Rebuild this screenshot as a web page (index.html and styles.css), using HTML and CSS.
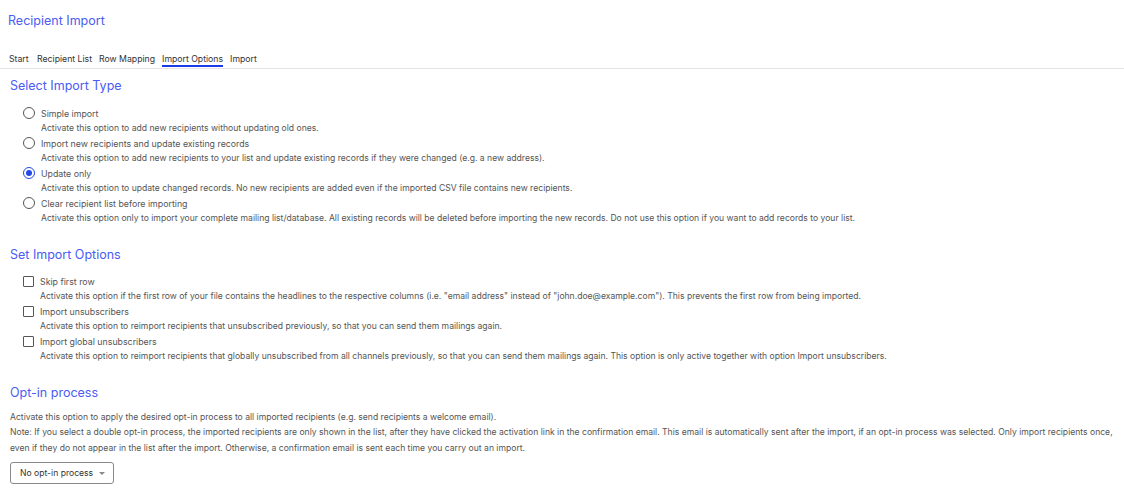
FILE: index.html
```html
<!DOCTYPE html>
<html lang="en">
<head>
    <meta charset="UTF-8">
    <meta name="viewport" content="width=device-width, initial-scale=1.0">
    <title>Recipient Import</title>
    <link rel="stylesheet" href="styles.css">
</head>
<body>
    <div class="page">
        <h1 class="page-title">Recipient Import</h1>

        <nav class="tabs">
            <a class="tab">Start</a>
            <a class="tab">Recipient List</a>
            <a class="tab">Row Mapping</a>
            <a class="tab active">Import Options</a>
            <a class="tab">Import</a>
        </nav>

        <section class="section">
            <h2>Select Import Type</h2>
            <div class="options">
                <label class="option">
                    <span class="radio"></span>
                    <span class="option-text">
                        <span class="option-label">Simple import</span>
                        <span class="option-desc">Activate this option to add new recipients without updating old ones.</span>
                    </span>
                </label>
                <label class="option">
                    <span class="radio"></span>
                    <span class="option-text">
                        <span class="option-label">Import new recipients and update existing records</span>
                        <span class="option-desc">Activate this option to add new recipients to your list and update existing records if they were changed (e.g. a new address).</span>
                    </span>
                </label>
                <label class="option">
                    <span class="radio checked"></span>
                    <span class="option-text">
                        <span class="option-label">Update only</span>
                        <span class="option-desc">Activate this option to update changed records. No new recipients are added even if the imported CSV file contains new recipients.</span>
                    </span>
                </label>
                <label class="option">
                    <span class="radio"></span>
                    <span class="option-text">
                        <span class="option-label">Clear recipient list before importing</span>
                        <span class="option-desc">Activate this option only to import your complete mailing list/database. All existing records will be deleted before importing the new records. Do not use this option if you want to add records to your list.</span>
                    </span>
                </label>
            </div>
        </section>

        <section class="section">
            <h2>Set Import Options</h2>
            <div class="options">
                <label class="option">
                    <span class="checkbox"></span>
                    <span class="option-text">
                        <span class="option-label">Skip first row</span>
                        <span class="option-desc">Activate this option if the first row of your file contains the headlines to the respective columns (i.e. "email address" instead of "john.doe@example.com"). This prevents the first row from being imported.</span>
                    </span>
                </label>
                <label class="option">
                    <span class="checkbox"></span>
                    <span class="option-text">
                        <span class="option-label">Import unsubscribers</span>
                        <span class="option-desc">Activate this option to reimport recipients that unsubscribed previously, so that you can send them mailings again.</span>
                    </span>
                </label>
                <label class="option">
                    <span class="checkbox"></span>
                    <span class="option-text">
                        <span class="option-label">Import global unsubscribers</span>
                        <span class="option-desc">Activate this option to reimport recipients that globally unsubscribed from all channels previously, so that you can send them mailings again. This option is only active together with option Import unsubscribers.</span>
                    </span>
                </label>
            </div>
        </section>

        <section class="section">
            <h2 class="tight">Opt-in process</h2>
            <p class="note">Activate this option to apply the desired opt-in process to all imported recipients (e.g. send recipients a welcome email).<br>
            Note: If you select a double opt-in process, the imported recipients are only shown in the list, after they have clicked the activation link in the confirmation email. This email is automatically sent after the import, if an opt-in process was selected. Only import recipients once, even if they do not appear in the list after the import. Otherwise, a confirmation email is sent each time you carry out an import.</p>
            <div class="dropdown">
                <span>No opt-in process</span>
                <span class="caret"></span>
            </div>
        </section>
    </div>
</body>
</html>
```

FILE: styles.css
```css
body {
    margin: 0;
    font-family: Inter, "Noto Sans", sans-serif;
    color: #555;
    background-color: white;
}

.page {
    padding: 13px 0 0 8px;
}

.page-title {
    font-size: 12.5px;
    font-weight: 400;
    line-height: 15px;
    color: #4a5cf3;
    margin: 0 0 26px 0;
}

.tabs {
    display: flex;
    gap: 7px;
    border-bottom: 1px solid #e4e4e4;
    margin-left: -8px;
    padding-left: 9px;
}

.tab {
    font-size: 8.7px;
    line-height: 10.5px;
    color: #333;
    border-bottom: 2px solid transparent;
    margin-bottom: 1px;
}

.tab:first-child {
    margin-right: 1.5px;
}

.tab.active {
    border-bottom-color: #1a3ce8;
}

.section {
    margin-top: 21px;
}

.tabs + .section {
    margin-top: 9.5px;
}

.section h2 {
    font-size: 12.5px;
    font-weight: 400;
    line-height: 15px;
    color: #4a5cf3;
    margin: 0 0 12.5px 2px;
}

.section h2.tight {
    margin-bottom: 9.5px;
}

.options {
    padding-left: 15px;
    display: flex;
    flex-direction: column;
}

.option {
    display: flex;
    gap: 6px;
    font-size: 8.6px;
    line-height: 15px;
}

.option-text {
    display: flex;
    flex-direction: column;
}

.option-label {
    font-size: 8.8px;
    color: #555;
}

.radio {
    width: 10px;
    height: 10px;
    border: 1px solid #555;
    border-radius: 50%;
    margin-top: 1.5px;
    flex-shrink: 0;
    display: flex;
    align-items: center;
    justify-content: center;
}

.radio.checked {
    border-color: #2448e8;
}

.radio.checked::after {
    content: "";
    width: 6px;
    height: 6px;
    border-radius: 50%;
    background-color: #2448e8;
}

.checkbox {
    width: 9px;
    height: 9px;
    border: 1px solid #555;
    border-radius: 1px;
    margin-top: 2px;
    flex-shrink: 0;
}

.note {
    font-size: 8.6px;
    line-height: 15.7px;
    margin: 0 0 3.5px 2px;
}

.dropdown {
    display: inline-flex;
    align-items: center;
    gap: 6px;
    margin-left: 2px;
    height: 20px;
    padding: 0 8px 0 9px;
    border: 1px solid #888;
    border-radius: 3px;
    font-size: 8.6px;
    color: #333;
}

.caret {
    width: 0;
    height: 0;
    border-left: 3px solid transparent;
    border-right: 3px solid transparent;
    border-top: 3px solid #888;
}
```
